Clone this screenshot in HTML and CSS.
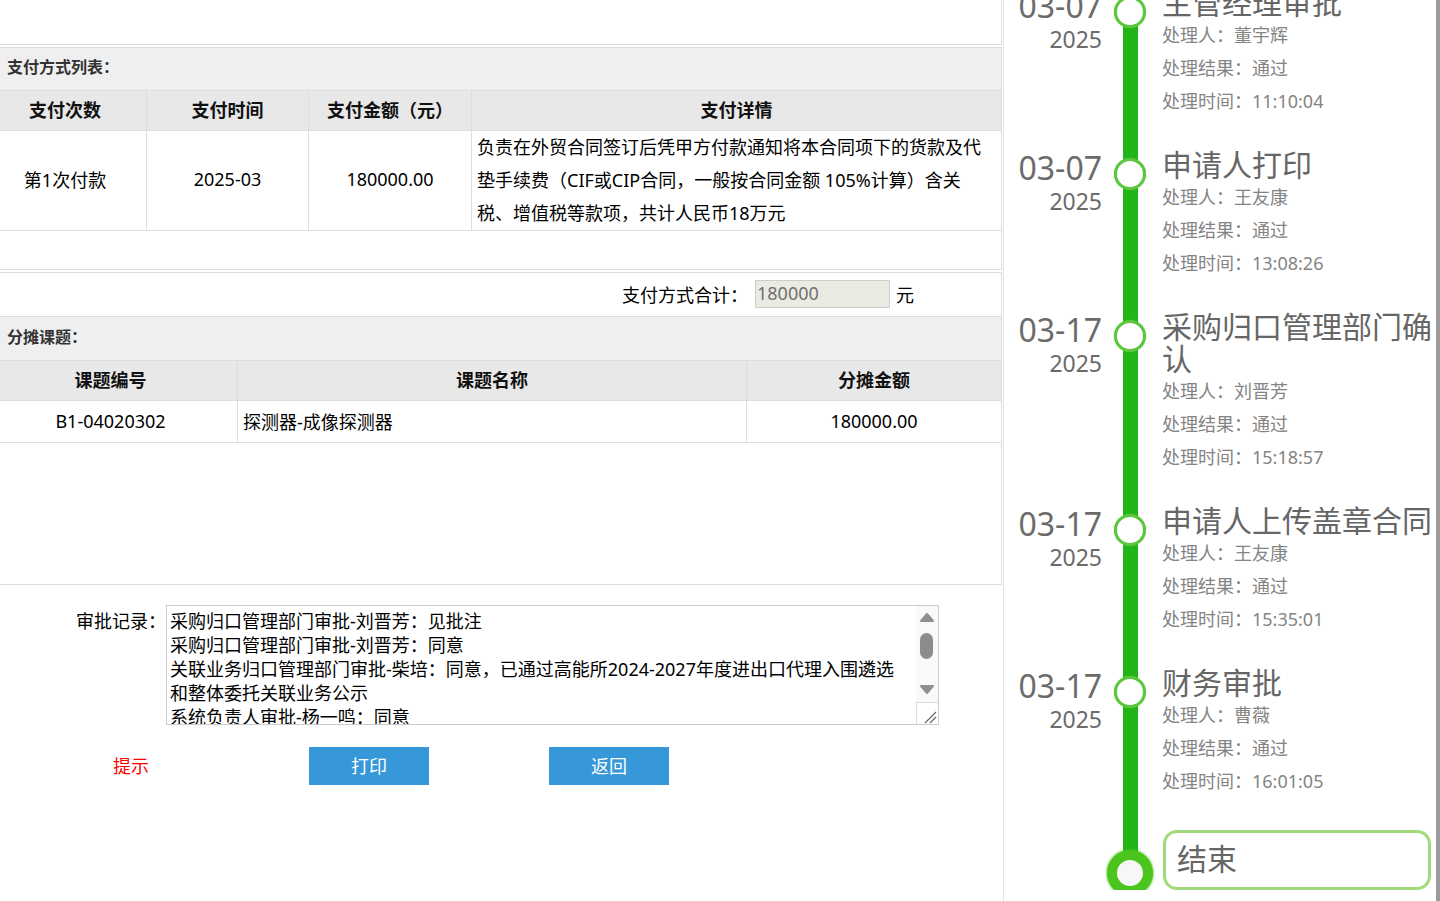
FILE: index.html
```html
<!DOCTYPE html>
<html lang="zh-CN">
<head>
<meta charset="utf-8">
<title>审批详情</title>
<link rel="stylesheet" href="styles.css">
</head>
<body>
<div class="page">
  <div class="main">
    <div class="box box-top"></div>

    <div class="box box-pay">
      <div class="sec-head pay-head">支付方式列表：</div>
      <table class="grid">
        <colgroup>
          <col class="w147"><col class="w162"><col class="w163"><col class="w529">
        </colgroup>
        <tr>
          <th class="first">支付次数</th>
          <th>支付时间</th>
          <th>支付金额（元）</th>
          <th class="last">支付详情</th>
        </tr>
        <tr class="pay-row">
          <td class="first">第1次付款</td>
          <td>2025-03</td>
          <td>180000.00</td>
          <td class="last detail">负责在外贸合同签订后凭甲方付款通知将本合同项下的货款及代垫手续费（CIF或CIP合同，一般按合同金额 105%计算）含关税、增值税等款项，共计人民币18万元</td>
        </tr>
      </table>
      <div class="pay-spacer"></div>
    </div>

    <div class="box box-split">
      <div class="total-row">
        <span>支付方式合计：</span>
        <input class="total-input" type="text" value="180000" readonly>
        <span>元</span>
      </div>
      <div class="sec-head split-head">分摊课题：</div>
      <table class="grid">
        <colgroup>
          <col class="w238"><col class="w509"><col class="w254">
        </colgroup>
        <tr>
          <th class="first">课题编号</th>
          <th>课题名称</th>
          <th class="last">分摊金额</th>
        </tr>
        <tr class="split-row">
          <td class="first">B1-04020302</td>
          <td class="left">探测器-成像探测器</td>
          <td class="last">180000.00</td>
        </tr>
      </table>
      <div class="split-spacer"></div>
    </div>

    <div class="approval">
      <div class="ap-label">审批记录：</div>
      <div class="record">
        <div class="record-text">
          <div>采购归口管理部门审批-刘晋芳：见批注</div>
          <div>采购归口管理部门审批-刘晋芳：同意</div>
          <div>关联业务归口管理部门审批-柴培：同意，已通过高能所2024-2027年度进出口代理入围遴选和整体委托关联业务公示</div>
          <div>系统负责人审批-杨一鸣：同意</div>
        </div>
        <div class="scrollbar">
          <div class="sb-btn">
            <svg width="22" height="22" viewBox="0 0 22 22"><polygon points="11,8 17,15 5,15" fill="#8f8f8f" stroke="#8f8f8f" stroke-width="2" stroke-linejoin="round"/></svg>
          </div>
          <div class="sb-thumb"></div>
          <div class="sb-track"></div>
          <div class="sb-btn">
            <svg width="22" height="22" viewBox="0 0 22 22"><polygon points="5,6 17,6 11,13" fill="#8f8f8f" stroke="#8f8f8f" stroke-width="2" stroke-linejoin="round"/></svg>
          </div>
          <div class="sb-resizer">
            <svg width="21" height="21" viewBox="0 0 21 21"><line x1="8" y1="20" x2="19" y2="9" stroke="#6a6a6a" stroke-width="1.2"/><line x1="13" y1="20" x2="19" y2="14" stroke="#6a6a6a" stroke-width="1.2"/></svg>
          </div>
        </div>
      </div>
    </div>

    <div class="actions">
      <span class="hint">提示</span>
      <button class="btn btn-print" type="button">打印</button>
      <button class="btn btn-back" type="button">返回</button>
    </div>
  </div>

  <div class="timeline-panel">
    <div class="timeline">
      <div class="tl-item">
        <div class="tl-date"><div class="tl-md">03-07</div><div class="tl-year">2025</div></div>
        <div class="tl-rail"><div class="tl-dot"></div></div>
        <div class="tl-body">
          <div class="tl-title">主管经理审批</div>
          <div class="tl-line">处理人：董宇辉</div>
          <div class="tl-line">处理结果：通过</div>
          <div class="tl-line">处理时间：11:10:04</div>
        </div>
      </div>
      <div class="tl-item">
        <div class="tl-date"><div class="tl-md">03-07</div><div class="tl-year">2025</div></div>
        <div class="tl-rail"><div class="tl-dot"></div></div>
        <div class="tl-body">
          <div class="tl-title">申请人打印</div>
          <div class="tl-line">处理人：王友康</div>
          <div class="tl-line">处理结果：通过</div>
          <div class="tl-line">处理时间：13:08:26</div>
        </div>
      </div>
      <div class="tl-item">
        <div class="tl-date"><div class="tl-md">03-17</div><div class="tl-year">2025</div></div>
        <div class="tl-rail"><div class="tl-dot"></div></div>
        <div class="tl-body">
          <div class="tl-title">采购归口管理部门确认</div>
          <div class="tl-line">处理人：刘晋芳</div>
          <div class="tl-line">处理结果：通过</div>
          <div class="tl-line">处理时间：15:18:57</div>
        </div>
      </div>
      <div class="tl-item">
        <div class="tl-date"><div class="tl-md">03-17</div><div class="tl-year">2025</div></div>
        <div class="tl-rail"><div class="tl-dot"></div></div>
        <div class="tl-body">
          <div class="tl-title">申请人上传盖章合同</div>
          <div class="tl-line">处理人：王友康</div>
          <div class="tl-line">处理结果：通过</div>
          <div class="tl-line">处理时间：15:35:01</div>
        </div>
      </div>
      <div class="tl-item">
        <div class="tl-date"><div class="tl-md">03-17</div><div class="tl-year">2025</div></div>
        <div class="tl-rail"><div class="tl-dot"></div></div>
        <div class="tl-body">
          <div class="tl-title">财务审批</div>
          <div class="tl-line">处理人：曹薇</div>
          <div class="tl-line">处理结果：通过</div>
          <div class="tl-line">处理时间：16:01:05</div>
        </div>
      </div>
      <div class="tl-end">
        <div class="tl-date"></div>
        <div class="tl-rail tl-rail-end"><div class="tl-ring"></div></div>
        <div class="tl-end-box">结束</div>
      </div>
    </div>
  </div>
  <div class="edge-bar"></div>
</div>
</body>
</html>
```

FILE: styles.css
```css
* {
  box-sizing: border-box;
}

html,
body {
  margin: 0;
  padding: 0;
}

body {
  width: 1440px;
  height: 901px;
  overflow: hidden;
  background: #fff;
  color: #000;
  font-family: "Noto Sans", "Noto Sans CJK SC", sans-serif;
}

.page {
  display: flex;
  height: 901px;
}

/* ---------- left column ---------- */
.main {
  width: 1002px;
  flex: none;
  display: flex;
  flex-direction: column;
}

.box {
  border-right: 1px solid #ddd;
}

.box-top {
  height: 45px;
  border-bottom: 1px solid #ddd;
  margin-bottom: 2px;
}

.box-pay {
  border-top: 1px solid #ddd;
  border-bottom: 1px solid #ddd;
  margin-bottom: 2px;
}

.box-split {
  border-top: 1px solid #ddd;
  border-bottom: 1px solid #ddd;
}

.sec-head {
  display: flex;
  align-items: center;
  background: #efefef;
  border-bottom: 1px solid #ddd;
  padding-left: 7px;
  font-size: 16px;
  font-weight: 700;
  color: #333;
}

.pay-head {
  height: 43px;
  padding-bottom: 6px;
}

.split-head {
  height: 44px;
  padding-bottom: 5px;
}

.grid {
  width: 1001px;
  border-collapse: separate;
  border-spacing: 0;
  table-layout: fixed;
  font-size: 18px;
}

.w147 { width: 147px; }
.w162 { width: 162px; }
.w163 { width: 163px; }
.w529 { width: 529px; }
.w238 { width: 238px; }
.w509 { width: 509px; }
.w254 { width: 254px; }

.grid th,
.grid td {
  padding: 0 0 3px 0;
  border-right: 1px solid #ddd;
  border-bottom: 1px solid #ddd;
  text-align: center;
  vertical-align: middle;
}

.grid th {
  height: 40px;
  background: #e8e8e8;
  font-weight: 700;
  color: #111;
}

.grid .first {
  padding-right: 16px;
}

.grid .last {
  border-right: none;
}

.grid .left {
  text-align: left;
  padding-left: 5px;
}

.pay-row td {
  height: 100px;
}

.grid td.detail {
  text-align: left;
  padding: 0 10px 0 5px;
  line-height: 33px;
}

.pay-spacer {
  height: 38px;
}

.total-row {
  height: 44px;
  display: flex;
  align-items: center;
  justify-content: flex-end;
  padding-right: 87px;
  padding-bottom: 2px;
  border-bottom: 1px solid #ddd;
  font-size: 18px;
}

.total-input {
  width: 135px;
  height: 28px;
  margin: 0 6px 0 7px;
  padding: 0 0 2px 1px;
  background: #ebebe4;
  border: 1px solid #cdcdcd;
  font-family: inherit;
  font-size: 18px;
  color: #707070;
  outline: none;
}

.split-row td {
  height: 42px;
  padding-bottom: 2px;
}

.split-spacer {
  height: 141px;
}

/* ---------- approval ---------- */
.approval {
  display: flex;
  margin-top: 20px;
}

.ap-label {
  width: 166px;
  flex: none;
  text-align: right;
  font-size: 18px;
  line-height: 24px;
  padding-top: 4px;
}

.record {
  width: 773px;
  height: 120px;
  flex: none;
  display: flex;
  border: 1px solid #ccc;
}

.record-text {
  flex: 1;
  overflow: hidden;
  padding: 3px 16px 0 3px;
  font-size: 18px;
  line-height: 24px;
}

.scrollbar {
  width: 22px;
  flex: none;
  display: flex;
  flex-direction: column;
  background: #f9f9f9;
}

.sb-btn {
  height: 22px;
  display: flex;
}

.sb-thumb {
  width: 13px;
  height: 26px;
  margin: 5px 0 0 4px;
  border-radius: 7px;
  background: #8c8c8c;
}

.sb-track {
  flex: 1;
}

.sb-resizer {
  height: 22px;
  border-top: 1px solid #ddd;
  border-left: 1px solid #ddd;
  background: #fff;
  display: flex;
}

/* ---------- actions ---------- */
.actions {
  display: flex;
  align-items: center;
  height: 38px;
  margin-top: 22px;
  font-size: 18px;
}

.hint {
  margin-left: 113px;
  padding-bottom: 2px;
  color: #f00;
}

.btn {
  width: 120px;
  height: 38px;
  padding: 0 0 2px 0;
  border: none;
  background: #3698d8;
  color: #fff;
  font-family: inherit;
  font-size: 18px;
}

.btn-print {
  margin-left: 160px;
}

.btn-back {
  margin-left: 120px;
}

/* ---------- timeline ---------- */
.timeline-panel {
  width: 433px;
  flex: none;
  margin-left: 1px;
  border-left: 1px solid #e3e3e3;
  overflow: hidden;
}

.timeline {
  margin-top: -13px;
}

.tl-item,
.tl-end {
  display: flex;
}

.tl-date {
  width: 98px;
  flex: none;
  text-align: right;
  color: #6b6b6b;
  padding-top: 1px;
}

.tl-md {
  font-size: 32px;
  line-height: 36px;
}

.tl-year {
  font-size: 23px;
  line-height: 30px;
}

.tl-rail {
  width: 60px;
  flex: none;
  background: linear-gradient(to right, transparent 21px, #22b518 21px, #22b518 36px, transparent 36px);
}

.tl-dot {
  width: 32px;
  height: 32px;
  margin: 9px 0 0 12px;
  border-radius: 50%;
  background: #fff;
  border: 3px solid #5cc73e;
  box-shadow: 0 0 1px #5cc73e;
}

.tl-body {
  width: 272px;
  padding-bottom: 31px;
}

.tl-title {
  font-size: 30px;
  line-height: 32px;
  color: #666;
}

.tl-line {
  font-size: 18px;
  line-height: 33px;
  color: #848484;
}

.tl-end {
  height: 61px;
  overflow: hidden;
}

.tl-rail-end {
  background-size: 100% 44px;
  background-repeat: no-repeat;
}

.tl-ring {
  width: 46px;
  height: 46px;
  margin: 21px 0 0 5px;
  border-radius: 50%;
  border: 10px solid #4cc41e;
  background: #f7f7f7;
  box-shadow: 0 0 2px 1px rgba(76, 196, 30, 0.6);
}

.tl-end-box {
  width: 268px;
  height: 60px;
  margin: 1px 0 0 1px;
  border: 3px solid #a0da7b;
  border-radius: 14px;
  padding-left: 11px;
  font-size: 30px;
  line-height: 52px;
  color: #666;
}

.edge-bar {
  width: 4px;
  flex: none;
  background: #9b9b9b;
}
```
